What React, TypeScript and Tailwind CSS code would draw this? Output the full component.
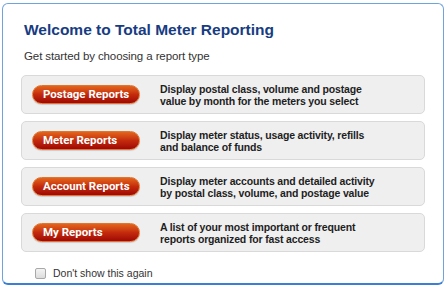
import React from "react";

const reports = [
  {
    label: "Postage Reports",
    lines: ["Display postal class, volume and postage", "value by month for the meters you select"],
  },
  {
    label: "Meter Reports",
    lines: ["Display meter status, usage activity, refills", "and balance of funds"],
  },
  {
    label: "Account Reports",
    lines: ["Display meter accounts and detailed activity", "by postal class, volume, and postage value"],
  },
  {
    label: "My Reports",
    lines: ["A list of your most important or frequent", "reports organized for fast access"],
  },
];

const ReportRow: React.FC<{ label: string; lines: string[] }> = ({ label, lines }) => (
  <div className="flex h-[39px] items-center rounded-[5px] border border-[#d9d9d9] bg-[#efefef] pl-[10px]">
    <button
      className="flex h-[19px] w-[108px] items-center rounded-full border border-[#e0752e] bg-gradient-to-b from-[#e2641c] via-[#c42a0c] to-[#9e0606] pl-[10px] text-left text-[11.5px] font-bold leading-none text-white [font-family:Roboto,'Liberation_Sans',sans-serif] shadow-[0_1px_1px_rgba(0,0,0,0.15)]"
    >
      {label}
    </button>
    <div className="ml-[20px] text-[10.5px] font-bold leading-[12px] tracking-[-0.15px] text-[#1e1e1e] [font-family:'Liberation_Sans',Arial,sans-serif]">
      {lines.map((l) => (
        <div key={l}>{l}</div>
      ))}
    </div>
  </div>
);

export default function App() {
  return (
    <div className="h-[293px] w-[448px] bg-white pl-[2px] pt-[3px] [font-family:'Liberation_Sans',Arial,sans-serif]">
      <div className="h-[282px] w-[442px] rounded-[6px] border border-[#6fa3dc] border-b-2 border-b-[#3b7fd4] bg-white px-[18px]">
        <h1 className="pl-[3px] pt-[17px] text-[15.5px] font-bold leading-[18px] text-[#173c82]">
          Welcome to Total Meter Reporting
        </h1>
        <p className="mt-[10px] pl-[3px] text-[11.5px] leading-[14px] tracking-[-0.1px] text-[#333]">
          Get started by choosing a report type
        </p>
        <div className="mt-[12px] flex w-[404px] flex-col gap-[7px]">
          {reports.map((r) => (
            <ReportRow key={r.label} label={r.label} lines={r.lines} />
          ))}
        </div>
        <label className="mt-[15px] flex items-center pl-[14px] text-[10.5px] leading-[12px] text-[#333]">
          <span className="inline-block h-[11px] w-[11px] rounded-[2px] border border-[#a8a8a8] bg-gradient-to-b from-[#f4f4f4] to-[#dcdcdc]" />
          <span className="ml-[7px]">Don't show this again</span>
        </label>
      </div>
    </div>
  );
}
